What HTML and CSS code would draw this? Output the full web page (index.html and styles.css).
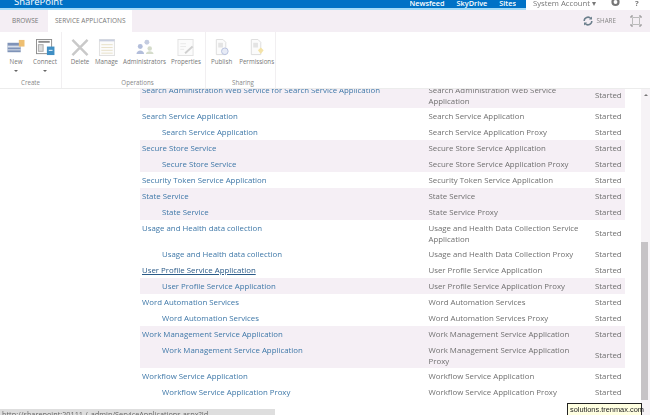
FILE: index.html
```html
<!DOCTYPE html>
<html lang="en">
<head>
<meta charset="utf-8">
<title>Service Applications</title>
<link rel="stylesheet" href="styles.css">
</head>
<body>
<div class="page">
  <header class="suite">
    <div class="suite-blue">
      <span class="brand">SharePoint</span>
      <nav class="suite-nav"><a>Newsfeed</a><a>SkyDrive</a><a class="here">Sites</a></nav>
    </div>
    <div class="suite-user">
      <span class="user">System Account ▾</span>
      <svg class="gear" width="11" height="11" viewBox="0 0 11 11"><circle cx="5.5" cy="3" r="3" fill="none" stroke="#777" stroke-width="2.2"/></svg>
      <span class="help">?</span>
    </div>
  </header>
  <div class="tabs">
    <span class="tab">BROWSE</span>
    <span class="tab active">SERVICE APPLICATIONS</span>
    <div class="tab-tools">
      <svg width="10" height="10" viewBox="0 0 10 10"><path d="M1.2 5a3.8 3.8 0 0 1 6.6-2.6M8.8 5a3.8 3.8 0 0 1-6.6 2.6" fill="none" stroke="#6b7f8c" stroke-width="1.5"/><path d="M9 .5v3H6zM1 9.500v-3h3z" fill="#6b7f8c"/></svg>
      <span class="share">SHARE</span>
      <svg class="focus" width="12" height="12" viewBox="0 0 12 12"><path d="M1 3V1h2M9 1h2v2M11 9v2H9M3 11H1V9" fill="none" stroke="#8a8a8a"/><path d="M2.500 2.500h7v7h-7z" fill="none" stroke="#bbb"/></svg>
    </div>
  </div>
  <section class="ribbon">
    <div class="group create">
      <div class="buttons">
        <div class="btn">
          <svg width="20" height="17" viewBox="0 0 20 18"><rect x="1" y="4" width="14" height="10" fill="#7f93b8"/><rect x="1" y="7" width="14" height="2" fill="#d8dfea"/><rect x="1" y="11" width="14" height="1" fill="#dfe4ee"/><rect x="13" y="1" width="6" height="7" fill="#eebf72"/></svg>
          <span>New</span><i class="caret"></i>
        </div>
        <div class="btn">
          <svg width="20" height="17" viewBox="0 0 20 18"><rect x="1" y="0.500" width="16" height="15" fill="#fff" stroke="#8d8d8d"/><rect x="3" y="2" width="12" height="2" fill="#8c8c8c"/><rect x="3" y="6" width="5" height="7" fill="#ddd" stroke="#aaa"/><rect x="12" y="8" width="8" height="9" fill="#3f8fc4"/><path d="M14 12h4" stroke="#fff"/></svg>
          <span>Connect</span><i class="caret"></i>
        </div>
      </div>
      <div class="label">Create</div>
    </div>
    <div class="group ops">
      <div class="buttons">
        <div class="btn">
          <svg width="20" height="17" viewBox="0 0 20 18"><path d="M2 1l16 16M18 1L2 17" stroke="#c9c9c9" stroke-width="2.600"/></svg>
          <span>Delete</span>
        </div>
        <div class="btn">
          <svg width="20" height="17" viewBox="0 0 20 18"><rect x="2" y="0.500" width="16" height="17" fill="#fbfbfb" stroke="#e0e0e0"/><path d="M2 1.500h16" stroke="#c9cfe0" stroke-width="2"/><path d="M4 6h12M4 9h12M4 12h12M4 15h12" stroke="#e8e0c8"/></svg>
          <span>Manage</span>
        </div>
        <div class="btn">
          <svg width="20" height="17" viewBox="0 0 20 18"><circle cx="12" cy="3.500" r="2.600" fill="#c4cce0"/><circle cx="5" cy="8" r="2.600" fill="#b3bedb"/><circle cx="15" cy="10" r="2.400" fill="#d5dccb"/><path d="M1 16c0-5 8-5 8 0z" fill="#b3bedb"/><path d="M11 16c0-4 8-4 8 0z" fill="#d5dccb"/></svg>
          <span>Administrators</span>
        </div>
        <div class="btn">
          <svg width="20" height="17" viewBox="0 0 20 18"><rect x="1.500" y="0.500" width="16" height="17" fill="#fbfbfb" stroke="#e2e2e2"/><path d="M4 5h6M4 8h6M4 11h4" stroke="#e8e8e8"/><path d="M9 15l8-7" stroke="#cfcfcf" stroke-width="2"/></svg>
          <span>Properties</span>
        </div>
      </div>
      <div class="label">Operations</div>
    </div>
    <div class="group sharing">
      <div class="buttons">
        <div class="btn">
          <svg width="20" height="17" viewBox="0 0 20 18"><path d="M4 .5h7l3 3v13H4z" fill="#fbfbfb" stroke="#dcdcdc"/><rect x="6" y="4" width="5" height="5" fill="#e4e4e4"/><circle cx="13" cy="13" r="3.500" fill="#e7ebf6" stroke="#b7c0de"/></svg>
          <span>Publish</span>
        </div>
        <div class="btn">
          <svg width="20" height="17" viewBox="0 0 20 18"><path d="M4 .5h7l3 3v13H4z" fill="#fbfbfb" stroke="#dcdcdc"/><rect x="6" y="4" width="5" height="5" fill="#e4e4e4"/><path d="M14 9l3 3-3 4-3-4z" fill="#f4e3a8"/></svg>
          <span>Permissions</span>
        </div>
      </div>
      <div class="label">Sharing</div>
    </div>
  </section>
  <div class="body">
    <main class="content">
      <table class="apps">
        <colgroup><col class="c1"><col class="c2"><col class="c3"></colgroup>
        <tr class="alt"><td><a>Search Administration Web Service for Search Service Application</a></td><td>Search Administration Web Service Application</td><td class="st">Started</td></tr>
        <tr><td><a>Search Service Application</a></td><td>Search Service Application</td><td class="st">Started</td></tr>
        <tr><td class="sub"><a>Search Service Application</a></td><td>Search Service Application Proxy</td><td class="st">Started</td></tr>
        <tr class="alt"><td><a>Secure Store Service</a></td><td>Secure Store Service Application</td><td class="st">Started</td></tr>
        <tr class="alt"><td class="sub"><a>Secure Store Service</a></td><td>Secure Store Service Application Proxy</td><td class="st">Started</td></tr>
        <tr><td><a>Security Token Service Application</a></td><td>Security Token Service Application</td><td class="st">Started</td></tr>
        <tr class="alt"><td><a>State Service</a></td><td>State Service</td><td class="st">Started</td></tr>
        <tr class="alt"><td class="sub"><a>State Service</a></td><td>State Service Proxy</td><td class="st">Started</td></tr>
        <tr><td><a>Usage and Health data collection</a></td><td>Usage and Health Data Collection Service Application</td><td class="st">Started</td></tr>
        <tr><td class="sub"><a>Usage and Health data collection</a></td><td>Usage and Health Data Collection Proxy</td><td class="st">Started</td></tr>
        <tr><td><a class="hover">User Profile Service Application</a></td><td>User Profile Service Application</td><td class="st">Started</td></tr>
        <tr class="alt"><td class="sub"><a>User Profile Service Application</a></td><td>User Profile Service Application Proxy</td><td class="st">Started</td></tr>
        <tr><td><a>Word Automation Services</a></td><td>Word Automation Services</td><td class="st">Started</td></tr>
        <tr><td class="sub"><a>Word Automation Services</a></td><td>Word Automation Services Proxy</td><td class="st">Started</td></tr>
        <tr class="alt"><td><a>Work Management Service Application</a></td><td>Work Management Service Application</td><td class="st">Started</td></tr>
        <tr class="alt"><td class="sub"><a>Work Management Service Application</a></td><td>Work Management Service Application Proxy</td><td class="st">Started</td></tr>
        <tr><td><a>Workflow Service Application</a></td><td>Workflow Service Application</td><td class="st">Started</td></tr>
        <tr><td class="sub"><a>Workflow Service Application Proxy</a></td><td>Workflow Service Application Proxy</td><td class="st">Started</td></tr>
      </table>
    </main>
    <aside class="scrollbar">
      <div class="arrow"></div>
      <div class="thumb"></div>
    </aside>
  </div>
  <div class="status">http://sharepoint:20111 /_admin/ServiceApplications.aspx?Id</div>
  <div class="tooltip">solutions.trenmax.com</div>
</div>
</body>
</html>
```

FILE: styles.css
```css
* { box-sizing: border-box; }
html, body { margin: 0; height: 100%; overflow: hidden; background: #fff; }
.page {
  position: relative;
  width: 650px;
  height: 415px;
  display: flex;
  flex-direction: column;
  overflow: hidden;
  font-family: "Open Sans", "Liberation Sans", sans-serif;
  font-size: 7.85px;
  color: #6f6f6f;
  filter: blur(0.3px);
}
.suite { height: 10px; display: flex; flex: none; overflow: hidden; }
.suite-blue {
  width: 526px;
  display: flex;
  justify-content: space-between;
  background: #0072c6;
  border-bottom: 2px solid #a6dcf8;
  padding: 0 10px 0 14px;
  color: #fff;
}
.brand { font-size: 9.500px; line-height: 6px; margin-top: -1px; height: 8px; }
.suite-nav { display: flex; gap: 12px; font-size: 7.300px; line-height: 6px; font-weight: 600; height: 8px; overflow: hidden; }
.suite-user { flex: 1; display: flex; padding-left: 7px; font-size: 7.700px; line-height: 6px; color: #777; }
.user { width: 77px; }
.gear { margin-top: -1px; }
.help { margin-left: 14px; font-weight: 700; }
.tabs {
  height: 22px;
  flex: none;
  display: flex;
  background: #f4eef4;
  font-size: 6.500px;
  line-height: 22px;
  color: #777;
}
.tab { padding: 0 7px 0 12px; width: 48px; white-space: nowrap; }
.tab.active { background: #fff; width: 84px; padding-left: 7px; }
.tab-tools { margin-left: auto; display: flex; align-items: center; padding-right: 8px; gap: 4px; }
.share { font-size: 6.300px; color: #888; margin-right: 10px; }
.ribbon {
  height: 57px;
  flex: none;
  display: flex;
  background: #fff;
  border-bottom: 1px solid #ececec;
  position: relative;
  z-index: 1;
  font-size: 6.200px;
}
.group { display: flex; flex-direction: column; border-right: 1px solid #f1eff1; }
.create { width: 62px; }
.ops { width: 144px; padding-left: 8px; }
.sharing { width: 70px; padding-left: 5px; }
.buttons { flex: 1; display: flex; gap: 5px; padding-top: 7px; }
.create .buttons { gap: 3px; padding-left: 3px; }
.sharing .buttons { gap: 7px; }
.btn { display: flex; flex-direction: column; align-items: center; line-height: 10px; color: #777; }
.create .btn { width: 26px; }
.btn svg { display: block; margin-bottom: 1px; }
.caret { width: 0; height: 0; margin-top: 3px; border: 2px solid transparent; border-top-color: #666; }
.label { text-align: center; height: 10px; line-height: 10px; color: #888; }
.body { flex: 1; display: flex; min-height: 0; }
.content { flex: 1; padding: 0 16px 0 140px; overflow: hidden; }
.apps {
  width: 485px;
  margin-top: -7px;
  border-collapse: collapse;
  table-layout: fixed;
  line-height: 11px;
}
.c1 { width: 286.500px; }
.c2 { width: 166.500px; }
.c3 { width: 32px; }
.apps td { padding: 2.500px 8px 1.500px 2px; height: 16px; vertical-align: top; color: #707070; }
.apps td.st { vertical-align: middle; padding-right: 0; }
.apps td.sub { padding-left: 22px; }
.apps a { color: #3f78a8; }
.apps a.hover { color: #2a5a88; text-decoration: underline; }
.alt { background: #f5eff5; }
.scrollbar { width: 9px; flex: none; background: #f6f3f6; position: relative; }
.arrow {
  position: absolute;
  top: 3px;
  left: 3px;
  width: 0;
  height: 0;
  border: 2px solid transparent;
  border-bottom-color: #777;
}
.thumb { position: absolute; top: 153px; left: 0; width: 7px; height: 158px; background: #c6c3c6; }
.status {
  position: absolute;
  left: 0;
  bottom: 0;
  width: 275px;
  height: 6px;
  background: #dedede;
  line-height: 11px;
  padding-left: 2px;
  font-size: 7.300px;
  overflow: hidden;
  white-space: nowrap;
  color: #666;
}
.tooltip {
  position: absolute;
  left: 567px;
  top: 403px;
  width: 75px;
  height: 13px;
  background: #ffffe1;
  border: 1px solid #222;
  color: #222;
  font: 7.400px/11px "Liberation Sans", sans-serif;
  padding-left: 2px;
  white-space: nowrap;
}
```
